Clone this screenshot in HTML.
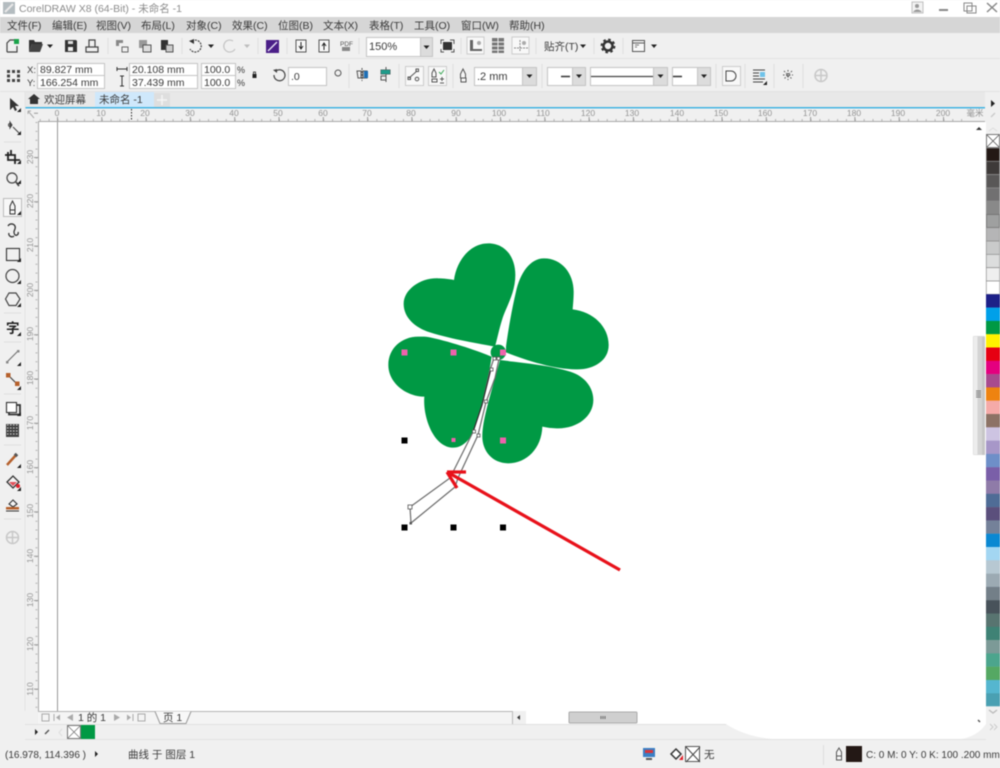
<!DOCTYPE html>
<html><head><meta charset="utf-8"><style>
html,body{margin:0;padding:0;width:1000px;height:768px;overflow:hidden;background:#f0f0f0}
svg{display:block;filter:blur(.45px)}
text{font-family:"Liberation Sans","Noto Sans CJK SC",sans-serif;font-size:10.5px;fill:#3a3a3a}
.r text{font-size:8.5px;fill:#949494;text-anchor:middle}
.ln{fill:none;stroke:#444;stroke-width:1.2}
.in{fill:#fff;stroke:#c4c4c4}
.dd{fill:#dcdcdc;stroke:#c4c4c4}
</style></head><body>
<svg width="1000" height="768" viewBox="0 0 1000 768" xmlns="http://www.w3.org/2000/svg">
<defs>
<polygon id="a" points="-3,-1.5 3,-1.5 0,2" fill="#222"/>
<polygon id="c" points="0,0 4,0 4,-4" fill="#222"/>
</defs>
<rect width="1000" height="768" fill="#f0f0f0"/>
<!-- title -->
<rect width="1000" height="17" fill="#fff"/>
<rect x="3" y="2" width="12" height="12" fill="#b4bcc0"/><path d="M5 12L13 4" stroke="#e8e8e8" stroke-width="2"/>
<text x="19" y="12" style="fill:#8c8c8c;font-size:10.5px">CorelDRAW X8 (64-Bit) - 未命名 -1</text>
<rect x="912" y="2" width="11" height="11" fill="#f2f2f2" stroke="#c0c0c0"/><circle cx="917" cy="6" r="2" fill="#999"/><path d="M913 12q4-5 9 0" fill="#999"/>
<rect x="939" y="9" width="9" height="2" fill="#888"/>
<path d="M964 3h8v8h-8zM967 6h9v7h-9z" fill="none" stroke="#888"/>
<path d="M987 3l10 9M997 3l-10 9" stroke="#888" stroke-width="1.5"/>
<!-- menu -->
<rect y="17" width="1000" height="16" fill="#d6d6d6"/>
<g style="font-size:10.5px">
<text x="7" y="29">文件(F)</text><text x="52" y="29">编辑(E)</text><text x="96" y="29">视图(V)</text><text x="141" y="29">布局(L)</text><text x="186" y="29">对象(C)</text><text x="232" y="29">效果(C)</text><text x="278" y="29">位图(B)</text><text x="323" y="29">文本(X)</text><text x="369" y="29">表格(T)</text><text x="414" y="29">工具(O)</text><text x="461" y="29">窗口(W)</text><text x="509" y="29">帮助(H)</text>
</g>
<!-- row separators -->
<line x1="0" y1="58.5" x2="1000" y2="58.5" stroke="#e2e2e2"/>
<line x1="0" y1="91.5" x2="1000" y2="91.5" stroke="#e2e2e2"/>
<rect x="25" y="92" width="960" height="15" fill="#e8e8e8"/>
<!-- row 1 icons -->
<path class="ln" d="M7 52V43l3-3h4M7 52h10V46"/><rect x="14" y="39" width="5" height="5" fill="#1aa34a"/>
<path d="M29 40h5l1 2h7v2H32l-3 8z" fill="#333"/><path d="M29 52l3-8h11l-3 8z" fill="#444"/>
<use href="#a" x="50" y="46"/>
<path d="M65 40h11l1 1v11H65z" fill="#333"/><rect x="68" y="47" width="5" height="4" fill="#eee"/><rect x="68" y="41" width="5" height="3" fill="#ddd"/>
<path class="ln" d="M86 47h12v5H86zM89 47v-7h6v7"/>
<line x1="108" y1="38" x2="108" y2="54" stroke="#ddd"/>
<path d="M116 40h7v3h-4v3h-3z" fill="#888"/><rect x="122" y="47" width="6" height="5" fill="none" stroke="#666"/>
<path d="M139 40h8v8h-8z" fill="#999"/><rect x="143" y="45" width="8" height="7" fill="#ddd" stroke="#555"/>
<path d="M161 40h7v10h-7z" fill="#333"/><rect x="166" y="45" width="7" height="7" fill="#ccc" stroke="#555"/>
<line x1="182" y1="38" x2="182" y2="54" stroke="#ddd"/>
<path d="M192 41a6 6 0 1 1-2 8" class="ln" stroke-dasharray="2 1"/><path d="M189 41l5-2v5z" fill="#333"/>
<use href="#a" x="211" y="46"/>
<path d="M233 41a6 6 0 1 0 2 8" fill="none" stroke="#c4c4c4" stroke-width="1.2"/><use href="#a" x="247" y="46" opacity=".25"/>
<line x1="258" y1="38" x2="258" y2="54" stroke="#ddd"/>
<rect x="266" y="40" width="13" height="13" fill="#4b1f88"/><path d="M268 51L277 42" stroke="#e6e0f5" stroke-width="1.4"/>
<line x1="287" y1="38" x2="287" y2="54" stroke="#ddd"/>
<rect x="296" y="40" width="10" height="12" fill="#f8f8f8" stroke="#555"/><path d="M301 42v6M299 46l2 3 2-3" fill="none" stroke="#222"/>
<rect x="319" y="40" width="10" height="12" fill="#f8f8f8" stroke="#555"/><path d="M324 50v-6M322 46l2-3 2 3" fill="none" stroke="#222"/>
<text x="340" y="46" style="font-size:6.5px;fill:#555">PDF</text><rect x="342" y="47" width="8" height="4" fill="#888"/>
<line x1="359" y1="38" x2="359" y2="54" stroke="#ddd"/>
<rect class="in" x="366.500" y="37.500" width="54" height="19"/><rect class="dd" x="420.500" y="37.500" width="12" height="19"/>
<use href="#a" x="426.500" y="47"/>
<text x="369" y="50" style="font-size:11px">150%</text>
<rect x="443" y="42" width="9" height="8" fill="#333"/><path d="M441 44v-4h3M450 40h4v4M454 49v3h-3M444 52h-3v-3" fill="none" stroke="#555"/>
<line x1="461" y1="38" x2="461" y2="54" stroke="#ddd"/>
<rect x="467" y="37" width="17" height="17" fill="#f8f8f8" stroke="#ccc"/><path d="M470 40h3v9h9v2H470z" fill="#666"/><circle cx="479" cy="43" r="2" fill="#aaa"/>
<path d="M492 38h12v15h-12z" fill="#777"/><path d="M492 42h12M492 46h12M492 50h12M498 38v15" stroke="#eee"/>
<rect x="512" y="37" width="17" height="17" fill="#f8f8f8" stroke="#ccc"/><path d="M520 40v12M514 48h14" stroke="#888" stroke-dasharray="2 1"/><circle cx="524" cy="43" r="2" fill="#aaa"/>
<line x1="536" y1="38" x2="536" y2="54" stroke="#ddd"/>
<text x="544" y="50">贴齐(T)</text><use href="#a" x="583" y="46"/>
<line x1="594" y1="38" x2="594" y2="54" stroke="#ddd"/>
<circle cx="608" cy="46" r="4.500" fill="none" stroke="#333" stroke-width="2.500"/><circle cx="608" cy="46" r="6.500" fill="none" stroke="#333" stroke-width="1.800" stroke-dasharray="2.600 2.500"/>
<line x1="623" y1="38" x2="623" y2="54" stroke="#ddd"/>
<rect x="632.500" y="40.500" width="12" height="11" fill="#f8f8f8" stroke="#555"/><path d="M633 43h11" stroke="#555"/><path d="M635 45h4M635 47h2" stroke="#777"/>
<use href="#a" x="654" y="46"/>
<!-- row 2 -->
<g fill="#444"><rect x="7" y="70" width="3" height="3"/><rect x="12" y="70" width="3" height="3"/><rect x="17" y="70" width="3" height="3"/><rect x="7" y="74.500" width="3" height="3" /><rect x="17" y="74.500" width="3" height="3"/><rect x="7" y="79" width="3" height="3"/><rect x="12" y="79" width="3" height="3"/><rect x="17" y="79" width="3" height="3"/></g>
<text x="27" y="73" style="font-size:9.500px">X:</text><text x="27" y="86" style="font-size:9.500px">Y:</text>
<rect class="in" x="37.500" y="63.500" width="67" height="12"/><rect class="in" x="37.500" y="75.500" width="67" height="13"/>
<text x="40" y="73" style="font-size:10.500px">89.827 mm</text><text x="40" y="86" style="font-size:10.500px">166.254 mm</text>
<path d="M117 69h10M117 67v4M127 67v4" stroke="#333"/>
<path d="M122 76v10M120 76h4M120 86h4" stroke="#333"/>
<rect class="in" x="129.500" y="63.500" width="68" height="12"/><rect class="in" x="129.500" y="75.500" width="68" height="13"/>
<text x="132" y="73" style="font-size:10.500px">20.108 mm</text><text x="132" y="86" style="font-size:10.500px">37.439 mm</text>
<rect class="in" x="201.500" y="63.500" width="34" height="12"/><rect class="in" x="201.500" y="75.500" width="34" height="13"/>
<text x="204" y="73" style="font-size:10.500px">100.0</text><text x="204" y="86" style="font-size:10.500px">100.0</text>
<text x="237" y="73" style="font-size:9px">%</text><text x="237" y="86" style="font-size:9px">%</text>
<rect x="252.500" y="74" width="4" height="4" fill="#222"/><path d="M253.500 74v-2h2v2" fill="none" stroke="#222" stroke-width=".8"/>
<path d="M276 71a5.500 5.500 0 1 1-2 4" class="ln"/><path d="M273 70l4-1v4z" fill="#444"/>
<rect class="in" x="288.500" y="67.500" width="38" height="18"/><text x="291" y="80" style="font-size:10.500px">.0</text>
<circle cx="338" cy="73" r="3" fill="none" stroke="#555"/>
<line x1="349" y1="64" x2="349" y2="88" stroke="#ddd"/>
<path d="M357 71h4v7h-3zM363 71h4v7h-4z" fill="none" stroke="#555"/><rect x="364" y="71" width="4" height="7" fill="#1f6fb5"/><path d="M362 68v13" stroke="#555" stroke-dasharray="2 1"/>
<path d="M386 67v15M381 70h9v4h-9zM381 76h5v4h-5z" fill="none" stroke="#555"/><rect x="381" y="70" width="9" height="4" fill="#1f9b8a"/>
<line x1="399" y1="64" x2="399" y2="88" stroke="#ddd"/>
<rect x="405.500" y="66.500" width="18" height="19" fill="#f8f8f8" stroke="#ccc"/><path d="M409 78l8-7" stroke="#555"/><rect x="408" y="77" width="2.500" height="2.500" fill="none" stroke="#555"/><rect x="416" y="69" width="2.500" height="2.500" fill="none" stroke="#555"/><circle cx="417" cy="79" r="1.800" fill="none" stroke="#555"/>
<rect x="428.500" y="66.500" width="18" height="19" fill="#f8f8f8" stroke="#ccc"/><path d="M434 69l2 4v4h-4v-4z" fill="none" stroke="#555"/><path d="M439 72l2 2 3-4" stroke="#3aa655" fill="none"/><path d="M432 79h5v3h-5zM440 79h4M442 77v4M440 83h4" fill="none" stroke="#555"/>
<line x1="453" y1="64" x2="453" y2="88" stroke="#ddd"/>
<path d="M463 69l2.500 5v4h-5v-4z M461 78h5v4h-5z" fill="#f5f5f5" stroke="#555"/>
<rect class="in" x="474.500" y="67.500" width="48" height="18"/><rect class="dd" x="522.500" y="67.500" width="14" height="18"/><use href="#a" x="529.500" y="76"/>
<text x="477" y="80" style="font-size:11px">.2 mm</text>
<line x1="542" y1="64" x2="542" y2="88" stroke="#ddd"/>
<rect class="in" x="547.500" y="67.500" width="25" height="18"/><rect class="dd" x="572.500" y="67.500" width="13" height="18"/><use href="#a" x="579" y="76"/><path d="M561 76.500h9" stroke="#333" stroke-width="1.500"/>
<rect class="in" x="590.500" y="67.500" width="63" height="18"/><rect class="dd" x="653.500" y="67.500" width="14" height="18"/><use href="#a" x="660.500" y="76"/><path d="M591 76.500h62" stroke="#444" stroke-width="1.300"/>
<rect class="in" x="672.500" y="67.500" width="25" height="18"/><rect class="dd" x="697.500" y="67.500" width="13" height="18"/><use href="#a" x="704" y="76"/><path d="M673 76.500h9" stroke="#333" stroke-width="1.500"/>
<line x1="716" y1="64" x2="716" y2="88" stroke="#ddd"/>
<rect x="722.500" y="66.500" width="18" height="19" fill="#f8f8f8" stroke="#ccc"/><path d="M726 71h5a5 5 0 0 1 0 10h-5z" fill="none" stroke="#444"/>
<line x1="745" y1="64" x2="745" y2="88" stroke="#ddd"/>
<path d="M753 70h12M753 73h6M753 76h6M753 79h12M753 82h10" stroke="#444"/><rect x="760" y="72" width="5" height="5" fill="#6fc3ea"/><use href="#c" x="763" y="85"/>
<line x1="774" y1="64" x2="774" y2="88" stroke="#ddd"/>
<path d="M783 75h10M788 70v10M784 71l8 8M792 71l-8 8" stroke="#555" stroke-dasharray="1.500 1.500"/>
<line x1="803" y1="64" x2="803" y2="88" stroke="#ddd"/>
<circle cx="821" cy="75.500" r="6" fill="none" stroke="#c8c8c8" stroke-width="1.500"/><path d="M815 75.500h12M821 69.500v12" stroke="#c8c8c8" stroke-width="1.500"/>
<!-- tabs -->
<path d="M34 94l-6 5h2v5h8v-5h2z" fill="#333"/>
<text x="44" y="103" style="font-size:10.500px">欢迎屏幕</text>
<rect x="95" y="92" width="59" height="15" fill="#cfe8fb"/>
<text x="99" y="103" style="font-size:10.500px">未命名 -1</text>
<rect x="154" y="93" width="16" height="14" fill="#dedede"/><path d="M157 100h10M162 95v10" stroke="#f5f5f5" stroke-width="1.500"/>
<rect x="25" y="107" width="960" height="1.500" fill="#43b4e2"/>
<!-- canvas -->
<rect x="38" y="122" width="948" height="589" fill="#fff"/>
<line x1="57.500" y1="122" x2="57.500" y2="711" stroke="#999"/>
<!-- rulers -->
<rect x="25" y="109" width="960" height="12" fill="#f0f0f0"/>
<rect x="25" y="109" width="13" height="602" fill="#f0f0f0"/>
<line x1="38" y1="121.500" x2="985" y2="121.500" stroke="#a8a8a8"/>
<line x1="38.500" y1="121" x2="38.500" y2="711" stroke="#a8a8a8"/>
<path d="M28 111l6 7M28 111h3M28 111v3" stroke="#aaa" fill="none"/>
<line x1="39" y1="120" x2="970" y2="120" stroke="#b4b4b4" stroke-width="2" stroke-dasharray="1 7.860" stroke-dashoffset="-.7"/>
<line x1="12.700" y1="119" x2="985" y2="119" stroke="#999" stroke-width="4" stroke-dasharray="1 43.300"/>
<line x1="36.500" y1="122" x2="36.500" y2="711" stroke="#b4b4b4" stroke-width="2" stroke-dasharray="1 7.860"/>
<line x1="36" y1="112.700" x2="36" y2="711" stroke="#999" stroke-width="4" stroke-dasharray="1 43.300"/>
<line x1="131.500" y1="109" x2="131.500" y2="121" stroke="#222" stroke-dasharray="1.500 1.500"/>
<g class="r">
<text x="57" y="116">0</text><text x="101" y="116">10</text><text x="145" y="116">20</text><text x="190" y="116">30</text><text x="234" y="116">40</text><text x="278" y="116">50</text><text x="323" y="116">60</text><text x="367" y="116">70</text><text x="411" y="116">80</text><text x="456" y="116">90</text><text x="499" y="116">100</text><text x="543" y="116">110</text><text x="588" y="116">120</text><text x="632" y="116">130</text><text x="677" y="116">140</text><text x="721" y="116">150</text><text x="765" y="116">160</text><text x="810" y="116">170</text><text x="854" y="116">180</text><text x="898" y="116">190</text><text x="943" y="116">200</text><text x="975" y="116">毫米</text>
<text transform="translate(33 157)rotate(-90)">230</text><text transform="translate(33 201)rotate(-90)">220</text><text transform="translate(33 245)rotate(-90)">210</text><text transform="translate(33 290)rotate(-90)">200</text><text transform="translate(33 334)rotate(-90)">190</text><text transform="translate(33 378)rotate(-90)">180</text><text transform="translate(33 423)rotate(-90)">170</text><text transform="translate(33 467)rotate(-90)">160</text><text transform="translate(33 511)rotate(-90)">150</text><text transform="translate(33 556)rotate(-90)">140</text><text transform="translate(33 600)rotate(-90)">130</text><text transform="translate(33 644)rotate(-90)">120</text><text transform="translate(33 689)rotate(-90)">110</text>
</g>
<!-- clover -->
<g transform="translate(380 235) scale(.33333)" fill="#009944">
<path d="M345 335C300 326 220 314 150 292C105 278 72 248 71 208C70 165 120 128 175 130C190 130 210 132 222 135C228 85 265 25 325 25C375 25 406 65 406 120C406 175 378 215 366 255C358 280 352 310 345 335Z"/>
<path d="M378 335C384 290 395 225 408 170C420 115 450 70 492 70C545 70 581 115 581 170C581 190 579 210 578 223C640 230 686 275 686 330C686 378 640 404 590 403C530 404 440 378 378 352Z"/>
<path d="M360 375C420 383 510 390 570 410C615 424 640 458 640 495C640 545 590 582 530 580C515 580 500 578 487 575C485 640 440 685 385 685C335 685 305 645 307 600C309 545 335 470 360 375Z"/>
<path d="M335 365C300 350 220 322 150 307C135 304 125 305 115 305C65 305 25 340 25 390C25 445 80 485 133 485C128 545 160 638 220 638C250 638 275 610 290 570C305 530 325 430 335 365Z"/>
<circle cx="355" cy="352" r="23"/>
</g>
<!-- stem -->
<path d="M494 358L490 370 482 405 473 432 454 470 450 478 410 507 411 523 455 487 458 478 478 435 486 402 495 378 499 359Z" fill="#fff" stroke="#6a6a6a" stroke-width="1.200"/>
<path d="M491 369L482 405 473 432" stroke="#222" fill="none"/>
<g fill="#fff" stroke="#555" stroke-width=".8"><rect x="408" y="505" width="4" height="4"/><rect x="484.500" y="400" width="3" height="3"/><rect x="472.500" y="430" width="3" height="3"/><rect x="477" y="434" width="3" height="3"/><rect x="493" y="357" width="3" height="3"/><rect x="497" y="357" width="3" height="3"/><rect x="490" y="368" width="3" height="3"/></g>
<rect x="409.500" y="522" width="2.500" height="2.500" fill="#555"/>
<!-- handles -->
<g fill="#000"><rect x="401.500" y="437.500" width="6" height="6"/><rect x="401.500" y="524.500" width="6" height="6"/><rect x="450.500" y="524.500" width="6" height="6"/><rect x="500" y="524.500" width="6" height="6"/></g>
<g fill="#f062ac"><rect x="401.500" y="349.500" width="6" height="6"/><rect x="450.500" y="349.500" width="6" height="6"/><rect x="500" y="349.500" width="6" height="6"/><rect x="451.500" y="438" width="4" height="4"/><rect x="500" y="437.500" width="6" height="6"/></g>
<!-- arrow -->
<g stroke="#e8111a" stroke-width="3.200" fill="none"><path d="M620 570L449 473"/><path d="M447 472H466M447 472L457 488"/></g>
<!-- scrollbars -->
<rect x="973" y="336" width="12" height="119" rx="1" fill="#d4d4d4"/><rect x="973.500" y="336.500" width="4" height="118" fill="#ededed"/><rect x="982" y="337" width="3" height="118" fill="#c6c6c6"/>
<path d="M976 391h5M976 393h5M976 395h5M976 397h5" stroke="#777"/>
<!-- page nav -->
<rect x="38" y="711" width="474" height="13" fill="#f4f4f4"/>
<line x1="38" y1="711.500" x2="512" y2="711.500" stroke="#b4b4b4"/>
<rect x="513" y="711" width="473" height="13" fill="#fff"/>
<rect x="513" y="711" width="13" height="13" fill="#f0f0f0"/>
<line x1="512.500" y1="711" x2="512.500" y2="724" stroke="#bbb"/>
<polygon points="517,717.500 520,715 520,720" fill="#333"/>
<rect x="569" y="712" width="68" height="11" rx="1" fill="#cfcfcf" stroke="#aaa"/><path d="M601 716v3M603 716v3M605 716v3" stroke="#666"/>
<g fill="none" stroke="#aaa"><rect x="42" y="714" width="7" height="7"/><rect x="138" y="714" width="7" height="7"/></g>
<path d="M54 714v7" stroke="#aaa"/><polygon points="56,717.500 60,714.500 60,720.500" fill="#aaa"/><polygon points="67,717.500 73,714 73,721" fill="#aaa"/>
<text x="78" y="721" style="font-size:10.500px">1 的 1</text>
<polygon points="120,717.500 114,714 114,721" fill="#aaa"/><polygon points="131,717.500 127,714.500 127,720.500" fill="#aaa"/><path d="M133 714v7" stroke="#aaa"/>
<path d="M155 711.500L160 723.500H186L191 711.500" fill="#f8f8f8" stroke="#999"/>
<text x="163" y="721" style="font-size:10.500px">页 1</text>
<!-- palette row -->
<line x1="25" y1="724.500" x2="726" y2="724.500" stroke="#e0e0e0"/>
<polygon points="35,729 35,735 38,732" fill="#222"/>
<path d="M45 734l4-4" stroke="#555" stroke-width="1.400"/>
<path d="M62 729l-3 3.500 3 3.500" stroke="#ddd" fill="none"/>
<rect x="67.500" y="725.500" width="13" height="13" fill="#fff" stroke="#777"/><path d="M68 726l12 12M80 726l-12 12" stroke="#777" stroke-width=".8"/>
<rect x="81" y="725" width="14" height="14" fill="#009944"/>
<!-- watermark blob -->
<path d="M726 722H986V724Q975 740 950 740H790Q750 740 726 724Z" fill="#fff"/>
<!-- status -->
<line x1="0" y1="739.500" x2="1000" y2="739.500" stroke="#e2e2e2"/>
<text x="5" y="758" style="font-size:10px">(16.978, 114.396 )</text>
<polygon points="95,751 95,757 98,754" fill="#222"/>
<text x="128" y="758" style="font-size:10.500px">曲线 于 图层 1</text>
<rect x="643" y="748" width="12" height="9" fill="#3a7fc4"/><rect x="645" y="750" width="8" height="3" fill="#d9343a"/><rect x="646" y="758" width="6" height="2" fill="#555"/>
<path d="M671 754l5-5 5 5-5 5z" fill="#fff" stroke="#333" stroke-width="1.500"/><polygon points="679,760 683,755 683,760" fill="#e0202a"/>
<rect x="685.500" y="746.500" width="14" height="15" fill="#fff" stroke="#555"/><path d="M686 747l14 15M700 747l-14 15" stroke="#444"/>
<text x="704" y="758" style="font-size:10.500px">无</text>
<line x1="823.500" y1="745" x2="823.500" y2="765" stroke="#ddd"/>
<path d="M839 748l2.500 4v4h-5v-4zM836.500 756h5v4h-5z" fill="#f5f5f5" stroke="#555"/>
<rect x="846" y="746" width="16" height="16" fill="#231815"/>
<text x="866" y="758" style="font-size:10px">C: 0 M: 0 Y: 0 K: 100 .200 mm</text>
<!-- right side -->
<rect x="986" y="92" width="14" height="648" fill="#f0f0f0"/>
<polygon points="991,100 991,107 995,103.500" fill="#222"/>
<path d="M991 117l4-4" stroke="#ccc" stroke-width="1.400"/>
<polygon points="976,130 982,130 979,127" fill="#333"/><path d="M989 131l4-3 4 3" fill="none" stroke="#ddd"/>
<rect x="986.500" y="134.500" width="13" height="13" fill="#fff" stroke="#777"/><path d="M987 135l12 12M999 135l-12 12" stroke="#555" stroke-width=".8"/>
<g stroke="#8f8f8f" stroke-width=".7">
<rect x="986.300" y="148" width="13.400" height="13.300" fill="#231815"/>
<rect x="986.300" y="161.300" width="13.400" height="13.300" fill="#3e3a39"/>
<rect x="986.300" y="174.600" width="13.400" height="13.300" fill="#595757"/>
<rect x="986.300" y="187.900" width="13.400" height="13.300" fill="#717071"/>
<rect x="986.300" y="201.200" width="13.400" height="13.300" fill="#898989"/>
<rect x="986.500" y="214.500" width="13" height="13" fill="#9fa0a0" stroke="#777" stroke-width="1"/>
<rect x="986.300" y="227.800" width="13.400" height="13.300" fill="#b5b5b6"/>
<rect x="986.300" y="241.100" width="13.400" height="13.300" fill="#c9caca"/>
<rect x="986.300" y="254.400" width="13.400" height="13.300" fill="#dcdddd"/>
<rect x="986.300" y="267.700" width="13.400" height="13.300" fill="#efefef"/>
<rect x="986.300" y="281" width="13.400" height="13.300" fill="#fff"/>
</g>
<g>
<rect x="986" y="294.300" width="14" height="13.500" fill="#1d2088"/>
<rect x="986" y="307.600" width="14" height="13.500" fill="#00a0e9"/>
<rect x="986" y="320.900" width="14" height="13.500" fill="#009944"/>
<rect x="986" y="334.200" width="14" height="13.500" fill="#fff100"/>
<rect x="986" y="347.500" width="14" height="13.500" fill="#e60012"/>
<rect x="986" y="360.800" width="14" height="13.500" fill="#e4007f"/>
<rect x="986" y="374.100" width="14" height="13.500" fill="#a84b8e"/>
<rect x="986" y="387.400" width="14" height="13.500" fill="#ee8310"/>
<rect x="986" y="400.700" width="14" height="13.500" fill="#f5aaa8"/>
<rect x="986" y="414" width="14" height="13.500" fill="#8c7265"/>
<rect x="986" y="427.300" width="14" height="13.500" fill="#cdc4e2"/>
<rect x="986" y="440.600" width="14" height="13.500" fill="#a797c8"/>
<rect x="986" y="453.900" width="14" height="13.500" fill="#6e8fc8"/>
<rect x="986" y="467.200" width="14" height="13.500" fill="#7a5fa8"/>
<rect x="986" y="480.500" width="14" height="13.500" fill="#8f7ba8"/>
<rect x="986" y="493.800" width="14" height="13.500" fill="#4f6c96"/>
<rect x="986" y="507.100" width="14" height="13.500" fill="#5b4f7c"/>
<rect x="986" y="520.400" width="14" height="13.500" fill="#748199"/>
<rect x="986" y="533.700" width="14" height="13.500" fill="#0b88d2"/>
<rect x="986" y="547" width="14" height="13.500" fill="#a3d6f2"/>
<rect x="986" y="560.300" width="14" height="13.500" fill="#b7c8d2"/>
<rect x="986" y="573.600" width="14" height="13.500" fill="#9caab3"/>
<rect x="986" y="586.900" width="14" height="13.500" fill="#737f88"/>
<rect x="986" y="600.200" width="14" height="13.500" fill="#48525a"/>
<rect x="986" y="613.500" width="14" height="13.500" fill="#587470"/>
<rect x="986" y="626.800" width="14" height="13.500" fill="#3f8275"/>
<rect x="986" y="640.100" width="14" height="13.500" fill="#7c9a97"/>
<rect x="986" y="653.400" width="14" height="13.500" fill="#4ca58d"/>
<rect x="986" y="666.700" width="14" height="13.500" fill="#55a863"/>
<rect x="986" y="680" width="14" height="13.500" fill="#55b6cf"/>
<rect x="986" y="693.300" width="14" height="13" fill="#4aa0b2"/>
</g>
<path d="M989 710l4 3 4-3" fill="none" stroke="#bbb" stroke-width="1.400"/>
<path d="M990 724l3 3-3 3M994 724l3 3-3 3" fill="none" stroke="#ccc"/>
<path d="M978 720l2 2" stroke="#555" stroke-width="1.400"/>
<!-- left toolbox -->
<rect x="0" y="92" width="25" height="648" fill="#f0f0f0"/>
<line x1="25" y1="92" x2="25" y2="711" stroke="#e4e4e4"/>
<path d="M10 98v12l3-3 2 4 2-1-2-4h4z" fill="#333"/><use href="#c" x="17" y="112"/>
<path d="M10 122l2 3-2 3zM13 127l6 6" stroke="#444" fill="#444"/><circle cx="10" cy="125" r="1.500" fill="none" stroke="#444"/><use href="#c" x="17" y="135"/>
<line x1="4" y1="142" x2="21" y2="142" stroke="#ddd"/>
<path d="M8 152v8h10M5 155h10v9M11 150v5M20 160h-3" fill="none" stroke="#222" stroke-width="1.800"/><use href="#c" x="17" y="164"/>
<circle cx="12" cy="178" r="5" fill="none" stroke="#444" stroke-width="1.200"/><path d="M16 182l3 4" stroke="#444" stroke-width="1.800"/><use href="#c" x="17" y="184"/>
<rect x="3.500" y="198.500" width="18" height="18" fill="#f8f8f8" stroke="#bbb"/>
<path d="M12.500 201l2.500 5v4h-5v-4zM10 210h5v4h-5z" fill="#f5f5f5" stroke="#333"/><use href="#c" x="17" y="215"/>
<path d="M8 226a4 4 0 0 1 7 0c1 3-1 4-1 6 0 2 1 4 3 3 2-1 1-3 1-3M8 226" fill="none" stroke="#333" stroke-width="1.300"/><path d="M14 236c-2 2-6 0-5-3" fill="none" stroke="#333" stroke-width="1.300"/>
<rect x="6.500" y="248.500" width="13" height="12" fill="none" stroke="#333" stroke-width="1.100"/><use href="#c" x="17" y="262"/>
<circle cx="12.500" cy="276" r="6.500" fill="none" stroke="#444" stroke-width="1.200"/><use href="#c" x="17" y="284"/>
<path d="M9 293h7l4 6-4 6.500H9l-3.500-6.500z" fill="none" stroke="#444" stroke-width="1.200"/><use href="#c" x="17" y="307"/>
<line x1="4" y1="313" x2="21" y2="313" stroke="#ddd"/>
<text x="6" y="333" style="font-size:13.500px;font-weight:bold;fill:#222">字</text><use href="#c" x="17" y="336"/>
<line x1="4" y1="342" x2="21" y2="342" stroke="#ddd"/>
<path d="M7 362l11-11" stroke="#777" stroke-width="1.200"/><rect x="6" y="361" width="2.500" height="2.500" fill="#888"/><rect x="17" y="350" width="2.500" height="2.500" fill="#888"/><use href="#c" x="17" y="366"/>
<path d="M8 375l9 9" stroke="#444" stroke-width="1.200"/><rect x="6" y="373" width="4.500" height="4.500" fill="#b5602c"/><rect x="15" y="381.500" width="4.500" height="4.500" fill="#b5602c"/><use href="#c" x="17" y="390"/>
<line x1="4" y1="394" x2="21" y2="394" stroke="#ddd"/>
<rect x="6.500" y="402.500" width="10" height="10" fill="#fff" stroke="#333" stroke-width="1.100"/><path d="M17 405h3v9.500H9v-2" fill="none" stroke="#333" stroke-width="1.800"/><use href="#c" x="17" y="416"/>
<rect x="6" y="424" width="13" height="13" fill="#444"/><path d="M7 425h11M7 428h11M7 431h11M7 434h11" stroke="#ddd" stroke-dasharray="1.500 1.500"/>
<line x1="4" y1="445" x2="21" y2="445" stroke="#ddd"/>
<path d="M7 465l9-10" stroke="#b5602c" stroke-width="2.500"/><path d="M15 456l2-2" stroke="#555" stroke-width="3.500"/><use href="#c" x="17" y="468"/>
<path d="M7 482l6-6 6 6-6 6z" fill="#f5f5f5" stroke="#333" stroke-width="1.300"/><path d="M9 482h8l-4 4z" fill="#e0505a"/><circle cx="18" cy="486" r="2" fill="#e0202a"/><use href="#c" x="17" y="491"/>
<path d="M9 504l4-4 4 4-4 3z" fill="#f5f5f5" stroke="#333" stroke-width="1.100"/><rect x="6" y="507" width="13" height="2.500" fill="#b5602c"/><path d="M6 511h13" stroke="#333"/>
<line x1="4" y1="519" x2="21" y2="519" stroke="#ddd"/>
<circle cx="12.500" cy="537.500" r="6" fill="none" stroke="#c8c8c8" stroke-width="1.500"/><path d="M6.500 537.500h12M12.500 531.500v12" stroke="#c8c8c8" stroke-width="1.500"/>
</svg>
</body></html>
